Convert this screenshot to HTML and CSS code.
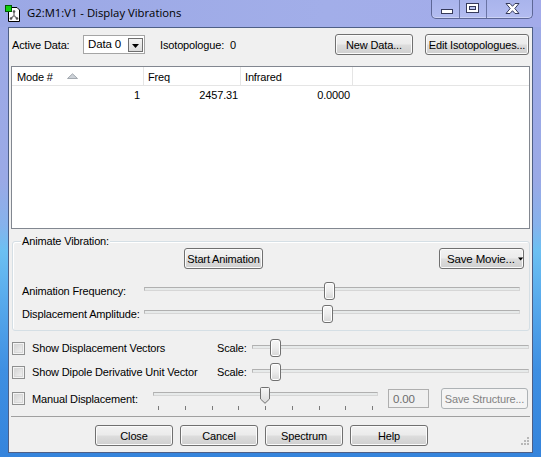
FILE: index.html
```html
<!DOCTYPE html>
<html>
<head>
<meta charset="utf-8">
<link rel="stylesheet" href="styles.css">
</head>
<body>
<div class="window">
  <div class="titlebar">
    <svg class="appicon" width="16" height="17" viewBox="0 0 16 17">
      <path d="M3.5 2.5 H12 L14.5 5 V16.5 H3.5 Z" fill="#fff" stroke="#000"/>
      <path d="M9 6.5 V10.5 M9 10.5 L6 13.5 M9 10.5 L12 13.5" stroke="#7d7d7d" stroke-width="1.4" fill="none"/>
      <circle cx="9" cy="6.5" r="1.3" fill="#555"/>
      <circle cx="6" cy="13.5" r="1.3" fill="#555"/>
      <circle cx="12" cy="13.5" r="1.3" fill="#555"/>
      <rect x="0.5" y="0.5" width="6" height="6" fill="#10d010" stroke="#005a00"/>
    </svg>
    <span class="title">G2:M1:V1 - Display Vibrations</span>
    <div class="caption-buttons">
      <div class="cb cb-min">
        <svg width="12" height="5" viewBox="0 0 12 5"><rect x="0.5" y="0.5" width="11" height="4" fill="#fff" stroke="#363a5a"/></svg>
      </div>
      <div class="cb cb-max">
        <svg width="13" height="10" viewBox="0 0 13 10"><rect x="0.5" y="0.5" width="12" height="9" fill="#fff" stroke="#363a5a"/><rect x="3.5" y="3.5" width="6" height="3" fill="#b9c3ee" stroke="#363a5a"/></svg>
      </div>
      <div class="cb cb-close">
        <svg width="15" height="11" viewBox="0 0 15 11"><path d="M1 0.5 H5 L7.5 3.3 L10 0.5 H14 L9.8 5.5 L14 10.5 H10 L7.5 7.7 L5 10.5 H1 L5.2 5.5 Z" fill="#fff" stroke="#363a5a"/></svg>
      </div>
    </div>
  </div>

  <div class="client">
    <div class="toprow">
      <span class="lbl-active">Active Data:</span>
      <div class="combo">
        <span class="combo-text">Data 0</span>
        <span class="combo-btn"><svg width="7" height="4" viewBox="0 0 7 4"><path d="M0 0 H7 L3.5 4 Z" fill="#000"/></svg></span>
      </div>
      <span class="lbl-iso">Isotopologue:&nbsp; 0</span>
      <button class="btn btn-newdata">New Data...</button>
      <button class="btn btn-editiso">Edit Isotopologues...</button>
    </div>

    <div class="listview">
      <div class="lv-header">
        <div class="hcol c1"><span class="htext">Mode #</span>
          <svg class="sortarrow" width="11" height="6" viewBox="0 0 11 6"><path d="M0.5 5.5 L5.5 0.8 L10.5 5.5 Z" fill="#cdd2d8" stroke="#a3a9b0"/></svg>
        </div>
        <div class="hcol c2">Freq</div>
        <div class="hcol c3">Infrared</div>
        <div class="hcol c4"></div>
      </div>
      <div class="lv-row">
        <div class="cell c1">1</div>
        <div class="cell c2">2457.31</div>
        <div class="cell c3">0.0000</div>
      </div>
    </div>

    <div class="group">
      <span class="legend">Animate Vibration:</span>
      <div class="anim-buttons">
        <button class="btn btn-start">Start Animation</button>
        <button class="btn btn-movie">Save Movie...<svg class="movie-arrow" width="7" height="4" viewBox="0 0 7 4"><path d="M0 0 H7 L3.5 4 Z" fill="#000"/></svg></button>
      </div>
      <div class="slider-row first">
        <span class="slider-label">Animation Frequency:</span>
        <div class="slider">
          <div class="track"></div>
          <div class="thumb" style="left:180px"></div>
        </div>
      </div>
      <div class="slider-row second">
        <span class="slider-label">Displacement Amplitude:</span>
        <div class="slider">
          <div class="track"></div>
          <div class="thumb" style="left:178px"></div>
        </div>
      </div>
    </div>

    <div class="check-row row1">
      <span class="checkbox"></span>
      <span class="check-label">Show Displacement Vectors</span>
      <span class="scale-label">Scale:</span>
      <div class="slider scale-slider">
        <div class="track"></div>
        <div class="thumb" style="left:18px"></div>
      </div>
    </div>
    <div class="check-row row2">
      <span class="checkbox"></span>
      <span class="check-label">Show Dipole Derivative Unit Vector</span>
      <span class="scale-label">Scale:</span>
      <div class="slider scale-slider">
        <div class="track"></div>
        <div class="thumb" style="left:18px"></div>
      </div>
    </div>
    <div class="check-row row3">
      <span class="checkbox"></span>
      <span class="manual-label">Manual Displacement:</span>
      <div class="slider manual-slider">
        <div class="track"></div>
        <div class="ticks">
          <span></span><span></span><span></span><span></span><span></span><span></span><span></span><span></span><span></span>
        </div>
        <svg class="pthumb" style="left:107px" width="10" height="17" viewBox="0 0 10 17">
          <defs><linearGradient id="pg" x1="0" y1="0" x2="0" y2="1"><stop offset="0" stop-color="#f7f7f7"/><stop offset="1" stop-color="#d9d9d9"/></linearGradient></defs>
          <path d="M0.5 1.5 Q0.5 0.5 1.5 0.5 H8.5 Q9.5 0.5 9.5 1.5 V12 L5 16.3 L0.5 12 Z" fill="url(#pg)" stroke="#707070"/>
        </svg>
      </div>
      <span class="textbox">0.00</span>
      <button class="btn btn-savestruct" disabled>Save Structure...</button>
    </div>

    <div class="separator"></div>

    <div class="bottom-row">
      <button class="btn btn-bottom">Close</button>
      <button class="btn btn-bottom">Cancel</button>
      <button class="btn btn-bottom">Spectrum</button>
      <button class="btn btn-bottom">Help</button>
      <svg class="grip" width="10" height="9" viewBox="0 0 10 9">
        <rect x="8" y="0" width="2" height="2" fill="#b8b8b8"/>
        <rect x="5" y="3" width="2" height="2" fill="#b8b8b8"/>
        <rect x="8" y="3" width="2" height="2" fill="#b8b8b8"/>
        <rect x="2" y="6" width="2" height="2" fill="#b8b8b8"/>
        <rect x="5" y="6" width="2" height="2" fill="#b8b8b8"/>
        <rect x="8" y="6" width="2" height="2" fill="#b8b8b8"/>
      </svg>
    </div>
  </div>
</div>
</body>
</html>
```

FILE: styles.css
```css
* { box-sizing: border-box; }

body {
  margin: 0;
  background: #ffffff;
}

.window {
  width: 541px;
  height: 457px;
  display: flex;
  flex-direction: column;
  overflow: hidden;
  font-family: "Liberation Sans", Arial, sans-serif;
  font-size: 11px;
  letter-spacing: -0.15px;
  color: #000;
  background: linear-gradient(to bottom,
    #9eaae6 0px, #9aa9e6 180px, #86b2ec 225px, #6cc0f2 250px,
    #58aaec 300px, #3f8fe2 370px, #3584dc 457px);
}

/* ---------- title bar ---------- */
.titlebar {
  height: 27px;
  flex: none;
  display: flex;
  align-items: flex-start;
  background: linear-gradient(to right, #9ba8e5, #a2aee9 60%, #a3abea);
}

.appicon {
  margin: 5px 0 0 5px;
  flex: none;
}

.title {
  margin: 5px 0 0 6px;
  font-family: "Open Sans", "Liberation Sans", sans-serif;
  font-size: 11.3px;
  line-height: 16px;
  letter-spacing: 0;
  color: #000;
}

.caption-buttons {
  margin-left: auto;
  margin-right: 8px;
  display: flex;
  height: 19px;
  border: 1px solid #5d6796;
  border-top: none;
  border-radius: 0 0 5px 5px;
  background: linear-gradient(to bottom, #a9b4ec, #b3bcf0);
  box-shadow: inset 0 -1px 0 rgba(255,255,255,0.35);
}

.cb {
  display: flex;
  align-items: flex-start;
}

.cb-min {
  width: 28px;
  padding: 9px 0 0 9px;
  border-right: 1px solid #6a74a4;
}

.cb-max {
  width: 27px;
  padding: 3px 0 0 6px;
  border-right: 1px solid #6a74a4;
}

.cb-close {
  width: 45px;
  padding: 3px 0 0 18px;
}

/* ---------- client ---------- */
.client {
  flex: 1;
  margin: 0 8px 4px 8px;
  border: 1px solid #4e5f86;
  background: #f0f0f0;
  display: flex;
  flex-direction: column;
  padding: 0 2px;
}

/* buttons */
.btn {
  font-family: "Liberation Sans", Arial, sans-serif;
  font-size: 11px;
  font-weight: normal;
  letter-spacing: -0.15px;
  white-space: nowrap;
  color: #000;
  height: 21px;
  padding: 0;
  border: 1px solid #707070;
  border-radius: 3px;
  background: linear-gradient(to bottom, #f2f2f2 0%, #ebebeb 48%, #dddddd 52%, #cfcfcf 100%);
  box-shadow: inset 0 0 0 1px #fbfbfb;
  display: flex;
  align-items: center;
  justify-content: center;
  flex: none;
}

.btn[disabled] {
  border-color: #adb2b5;
  background: #f4f4f4;
  box-shadow: none;
  color: #838383;
}

/* top row */
.toprow {
  margin-top: 6px;
  height: 21px;
  display: flex;
  align-items: center;
  flex: none;
}

.lbl-active {
  width: 71px;
  margin-left: 1px;
}

.combo {
  width: 62px;
  height: 19px;
  align-self: flex-start;
  margin-top: 1px;
  border: 1px solid #a5a5a5;
  background: #fff;
  display: flex;
  align-items: flex-start;
  justify-content: space-between;
}

.combo-text {
  margin: 2px 0 0 4px;
  font-size: 11.5px;
  line-height: 13px;
}

.combo-btn {
  width: 15px;
  height: 14px;
  margin: 2px 1px 0 0;
  border: 1px solid #6f6f6f;
  background: linear-gradient(to bottom, #f4f4f4, #dcdcdc);
  display: flex;
  align-items: center;
  justify-content: center;
  padding-top: 1px;
}

.lbl-iso {
  margin-left: 15px;
  white-space: pre;
}

.btn-newdata {
  margin-left: auto;
  width: 78px;
}

.btn-editiso {
  margin-left: 12px;
  margin-right: 1px;
  width: 104px;
}

/* list view */
.listview {
  margin-top: 11px;
  height: 163px;
  flex: none;
  border: 1px solid #828790;
  background: #fff;
  display: flex;
  flex-direction: column;
}

.lv-header {
  height: 19px;
  display: flex;
  border-bottom: 1px solid #e5e5e5;
}

.hcol {
  height: 18px;
  display: flex;
  align-items: center;
  border-right: 1px solid #e5e5e5;
  padding-left: 4px;
  padding-top: 2px;
}

.hcol.c1 { width: 132px; padding-left: 5px; }
.hcol.c2 { width: 97px; }
.hcol.c3 { width: 112px; }
.hcol.c4 { flex: 1; border-right: none; }

.htext { width: 50px; }

.sortarrow { margin-top: -2px; }

.lv-row {
  height: 17px;
  display: flex;
  align-items: center;
}

.cell {
  text-align: right;
  padding-right: 4px;
}

.cell.c1 { width: 132px; }
.cell.c2 { width: 97px; padding-right: 3px; }
.cell.c3 { width: 112px; padding-right: 3px; }

/* group box */
.group {
  margin: 12px 0 0 1px;
  flex: none;
  border: 1px solid #d5dfe5;
  border-radius: 3px;
  display: flex;
  flex-direction: column;
  padding-bottom: 7px;
  box-shadow: inset 1px 1px 0 #fff;
}

.legend {
  align-self: flex-start;
  margin: -7px 0 0 8px;
  padding: 0 1px;
  line-height: 13px;
  background: #f0f0f0;
}

.anim-buttons {
  height: 21px;
  display: flex;
  justify-content: space-between;
  padding: 0 5px 0 171px;
}

.btn-start { width: 79px; }

.btn-movie {
  width: 85px;
  justify-content: flex-start;
  padding-left: 7px;
  font-size: 11.5px;
}

.movie-arrow { margin-left: 3px; }

.slider-row {
  height: 18px;
  display: flex;
  align-items: center;
}

.slider-row.first { margin-top: 13px; }
.slider-row.second { margin-top: 5px; }

.slider-label {
  width: 131px;
  padding-left: 9px;
  flex: none;
}

.slider {
  position: relative;
  flex: 1;
  height: 18px;
}

.slider-row .slider { margin-right: 9px; }

.track {
  position: absolute;
  left: 0;
  right: 0;
  top: 5px;
  height: 4px;
  border: 1px solid #d6d6d6;
  border-top-color: #b0b0b0;
  border-left-color: #b8b8b8;
  background: #e7eaea;
}

.thumb {
  position: absolute;
  top: 0;
  width: 11px;
  height: 18px;
  border: 1px solid #707070;
  border-radius: 3px;
  background: linear-gradient(to bottom, #f7f7f7, #ececec 50%, #d6d6d6);
  box-shadow: inset 0 0 0 1px #fff;
}

/* check rows */
.check-row {
  display: flex;
  align-items: center;
  flex: none;
}

.check-row.row1 { margin-top: 8px; height: 18px; }
.check-row.row2 { margin-top: 6px; height: 18px; }
.check-row.row3 { margin-top: 7px; height: 21px; }

.checkbox {
  width: 13px;
  height: 13px;
  margin-left: 1px;
  flex: none;
  border: 1px solid #8e8f8f;
  background: linear-gradient(135deg, #cfcfcf, #f6f6f6);
  box-shadow: inset 0 0 0 1px #f4f4f4, inset 0 0 0 2px #d9d9d9;
}

.check-label {
  width: 185px;
  margin-left: 7px;
  flex: none;
}

.scale-label {
  width: 35px;
  flex: none;
}

.scale-slider {
  margin-right: 1px;
}

.scale-slider .track { top: 6px; }

.manual-label {
  width: 121px;
  margin-left: 7px;
  flex: none;
}

.manual-slider {
  flex: none;
  width: 225px;
  height: 21px;
}

.manual-slider .track { top: 4px; }

.pthumb {
  position: absolute;
  top: -1px;
}

.ticks {
  position: absolute;
  left: 5px;
  width: 215px;
  top: 18px;
  height: 4px;
  display: flex;
  justify-content: space-between;
}

.ticks span {
  width: 1px;
  height: 4px;
  background: #7a7a7a;
}

.textbox {
  margin-left: 10px;
  width: 41px;
  height: 19px;
  flex: none;
  border: 1px solid #afafaf;
  background: #f0f0f0;
  color: #6d6d6d;
  padding: 3px 0 0 4px;
  line-height: 13px;
  font-size: 11.5px;
}

.btn-savestruct {
  margin-left: 12px;
  width: 87px;
}

.separator {
  margin-top: 7px;
  height: 1px;
  flex: none;
  background: #a0a0a0;
}

.bottom-row {
  margin-top: 8px;
  height: 21px;
  flex: none;
  display: flex;
  padding-left: 84px;
  gap: 7px;
}

.btn-bottom {
  width: 78px;
}

.grip {
  margin-left: auto;
  margin-right: 1px;
  align-self: flex-end;
  margin-bottom: 0;
}
```
